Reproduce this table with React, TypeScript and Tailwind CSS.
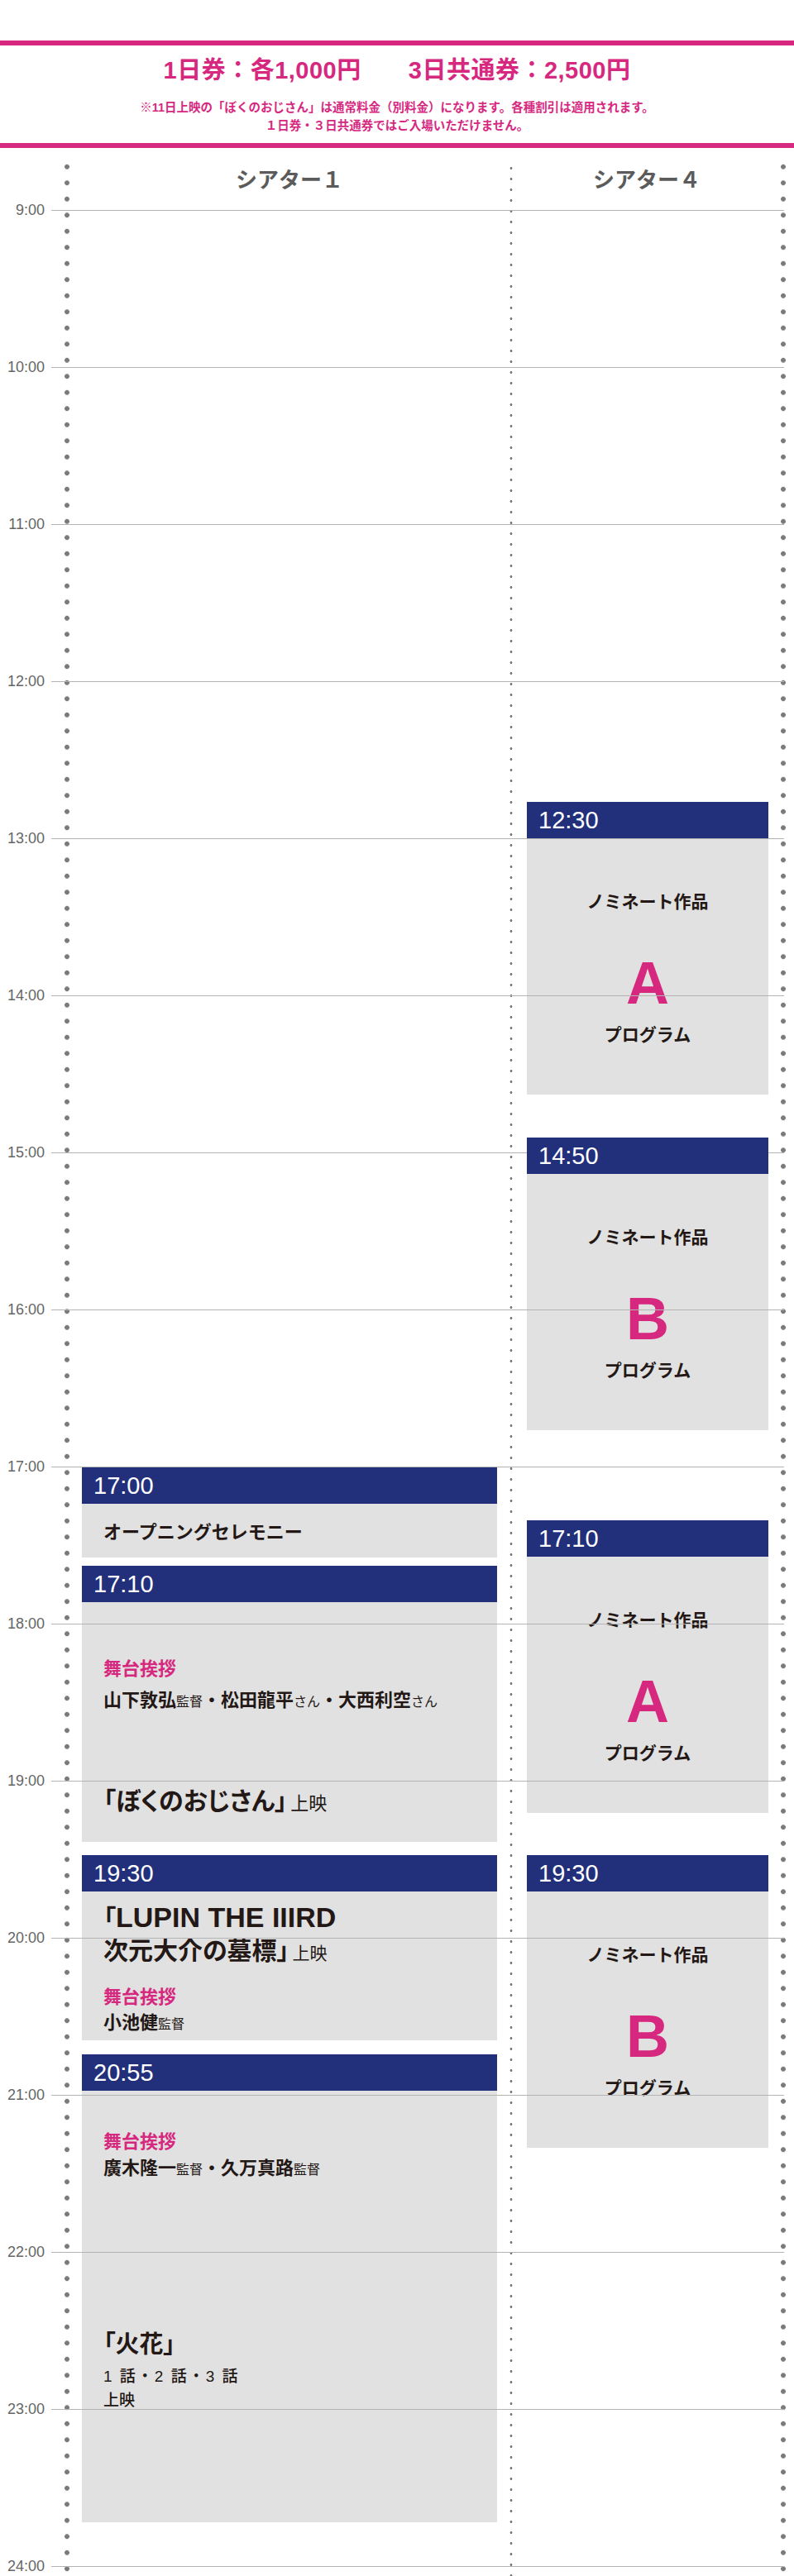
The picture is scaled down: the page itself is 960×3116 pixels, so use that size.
import React from 'react'

const hours = [
  '9:00', '10:00', '11:00', '12:00', '13:00', '14:00', '15:00', '16:00',
  '17:00', '18:00', '19:00', '20:00', '21:00', '22:00', '23:00', '24:00',
]

const TimeBar = ({ time }: { time: string }) => (
  <div className="relative z-20 flex h-[44px] items-center bg-[#22307b] pl-[14px] text-[29px] leading-none text-white">
    {time}
  </div>
)

const Nominee = ({ time, letter, className }: { time: string; letter: string; className: string }) => (
  <div className={className}>
    <TimeBar time={time} />
    <div className="flex h-[310px] flex-col items-center bg-[#e1e1e1] pt-[62px] text-[#231815]">
      <p className="text-[21px] font-bold leading-[30px]">ノミネート作品</p>
      <p className="mt-[47px] text-[72px] font-bold leading-[72px] text-[#d6287f]">{letter}</p>
      <p className="mt-[12px] text-[21px] font-bold leading-[30px]">プログラム</p>
    </div>
  </div>
)

const Small = ({ children }: { children: React.ReactNode }) => (
  <span className="text-[16px] font-normal">{children}</span>
)

const Stage = () => (
  <p className="text-[22px] font-bold leading-[30px] text-[#d6287f]">舞台挨拶</p>
)

const App = () => {
  return (
    <div className="w-[960px] bg-white [font-family:'Liberation_Sans','Noto_Sans_CJK_JP',sans-serif]">
      {/* price header */}
      <div className="h-[49px]" />
      <div className="h-[6px] bg-[#d6287f]" />
      <div className="flex h-[118px] flex-col items-center pt-[12px] text-[#d6287f]">
        <p className="text-[29px] font-bold leading-[36px] tracking-[0.5px]">
          1日券：各1,000円<span className="inline-block w-[57px]" />3日共通券：2,500円
        </p>
        <p className="mt-[16px] text-center text-[14.5px] font-bold leading-[22px]">
          ※11日上映の「ぼくのおじさん」は通常料金（別料金）になります。各種割引は適用されます。
          <br />
          １日券・３日共通券ではご入場いただけません。
        </p>
      </div>
      <div className="h-[6px] bg-[#d6287f]" />

      {/* timetable */}
      <div className="relative">
        <div className="flex h-[2937px]">
          <div className="w-[78px]" />
          <div className="mt-[13px] w-[6px] bg-[radial-gradient(circle,#7a7a7a_2.6px,transparent_3.2px)] bg-[length:6px_19.5px] bg-repeat-y" />

          {/* theater 1 */}
          <div className="w-[532px] px-[15px] text-[#231815]">
            <div className="-mx-[15px] flex h-[78px] items-center justify-center text-[26px] font-bold text-[#5b5b5b]">
              シアター１
            </div>

            <div className="mt-[1518px]">
              <TimeBar time="17:00" />
              <div className="h-[65px] bg-[#e1e1e1] pl-[26px] pt-[20px] text-[22px] font-bold leading-[30px]">
                オープニングセレモニー
              </div>
            </div>

            <div className="mt-[10px]">
              <TimeBar time="17:10" />
              <div className="h-[290px] bg-[#e1e1e1] pl-[26px] pt-[66px]">
                <Stage />
                <p className="mt-[8px] text-[22px] font-bold leading-[30px]">
                  山下敦弘<Small>監督</Small>・松田龍平<Small>さん</Small>・大西利空<Small>さん</Small>
                </p>
                <p className="mt-[85px] text-[30px] font-bold leading-[40px] [font-feature-settings:'palt']">
                  「ぼくのおじさん」<span className="ml-[4px] text-[22px] font-normal">上映</span>
                </p>
              </div>
            </div>

            <div className="mt-[16px]">
              <TimeBar time="19:30" />
              <div className="h-[180px] bg-[#e1e1e1] pl-[26px] pt-[12px]">
                <p className="text-[30px] font-bold leading-[39px] [font-feature-settings:'palt']">
                  「<span className="text-[34px]">LUPIN THE IIIRD</span>
                </p>
                <p className="text-[30px] font-bold leading-[39px] [font-feature-settings:'palt']">
                  次元大介の墓標」<span className="ml-[4px] text-[21px] font-normal">上映</span>
                </p>
                <div className="mt-[19px]">
                  <Stage />
                </div>
                <p className="mt-[1px] text-[22px] font-bold leading-[30px]">
                  小池健<Small>監督</Small>
                </p>
              </div>
            </div>

            <div className="mt-[17px]">
              <TimeBar time="20:55" />
              <div className="h-[522px] bg-[#e1e1e1] pl-[26px] pt-[47px]">
                <Stage />
                <p className="mt-[2px] text-[22px] font-bold leading-[30px]">
                  廣木隆一<Small>監督</Small>・久万真路<Small>監督</Small>
                </p>
                <p className="mt-[176px] text-[29px] font-bold leading-[40px] [font-feature-settings:'palt']">
                  「火花」
                </p>
                <p className="mt-[4px] text-[19px] font-medium leading-[29px] tracking-[2px]">
                  1 話・2 話・3 話
                </p>
                <p className="text-[19px] font-medium leading-[29px]">上映</p>
              </div>
            </div>
          </div>

          <div className="mt-[17.5px] w-[4px] bg-[radial-gradient(circle,#7a7a7a_1.2px,transparent_1.7px)] bg-[length:4px_13px] bg-repeat-y" />

          {/* theater 4 */}
          <div className="w-[324px] pl-[17px] pr-[15px]">
            <div className="-ml-[17px] -mr-[15px] flex h-[78px] items-center justify-center text-[26px] font-bold text-[#5b5b5b]">
              シアター４
            </div>
            <Nominee time="12:30" letter="A" className="mt-[713px]" />
            <Nominee time="14:50" letter="B" className="mt-[52px]" />
            <Nominee time="17:10" letter="A" className="mt-[109px]" />
            <Nominee time="19:30" letter="B" className="mt-[51px]" />
          </div>

          <div className="mt-[13px] w-[6px] bg-[radial-gradient(circle,#7a7a7a_2.6px,transparent_3.2px)] bg-[length:6px_19.5px] bg-repeat-y" />
          <div className="w-[10px]" />
        </div>

        {/* hour lines drawn over the grid */}
        <div className="pointer-events-none absolute left-0 top-[75px] z-10 flex flex-col gap-[190px]">
          {hours.map((h) => (
            <div key={h} className="flex h-0 items-center">
              <span className="w-[54px] text-right text-[18px] leading-none text-[#666]">{h}</span>
              <div className="ml-[8px] h-px w-[886px] bg-[#b4b4b4]" />
            </div>
          ))}
        </div>
      </div>
    </div>
  )
}

export default App
